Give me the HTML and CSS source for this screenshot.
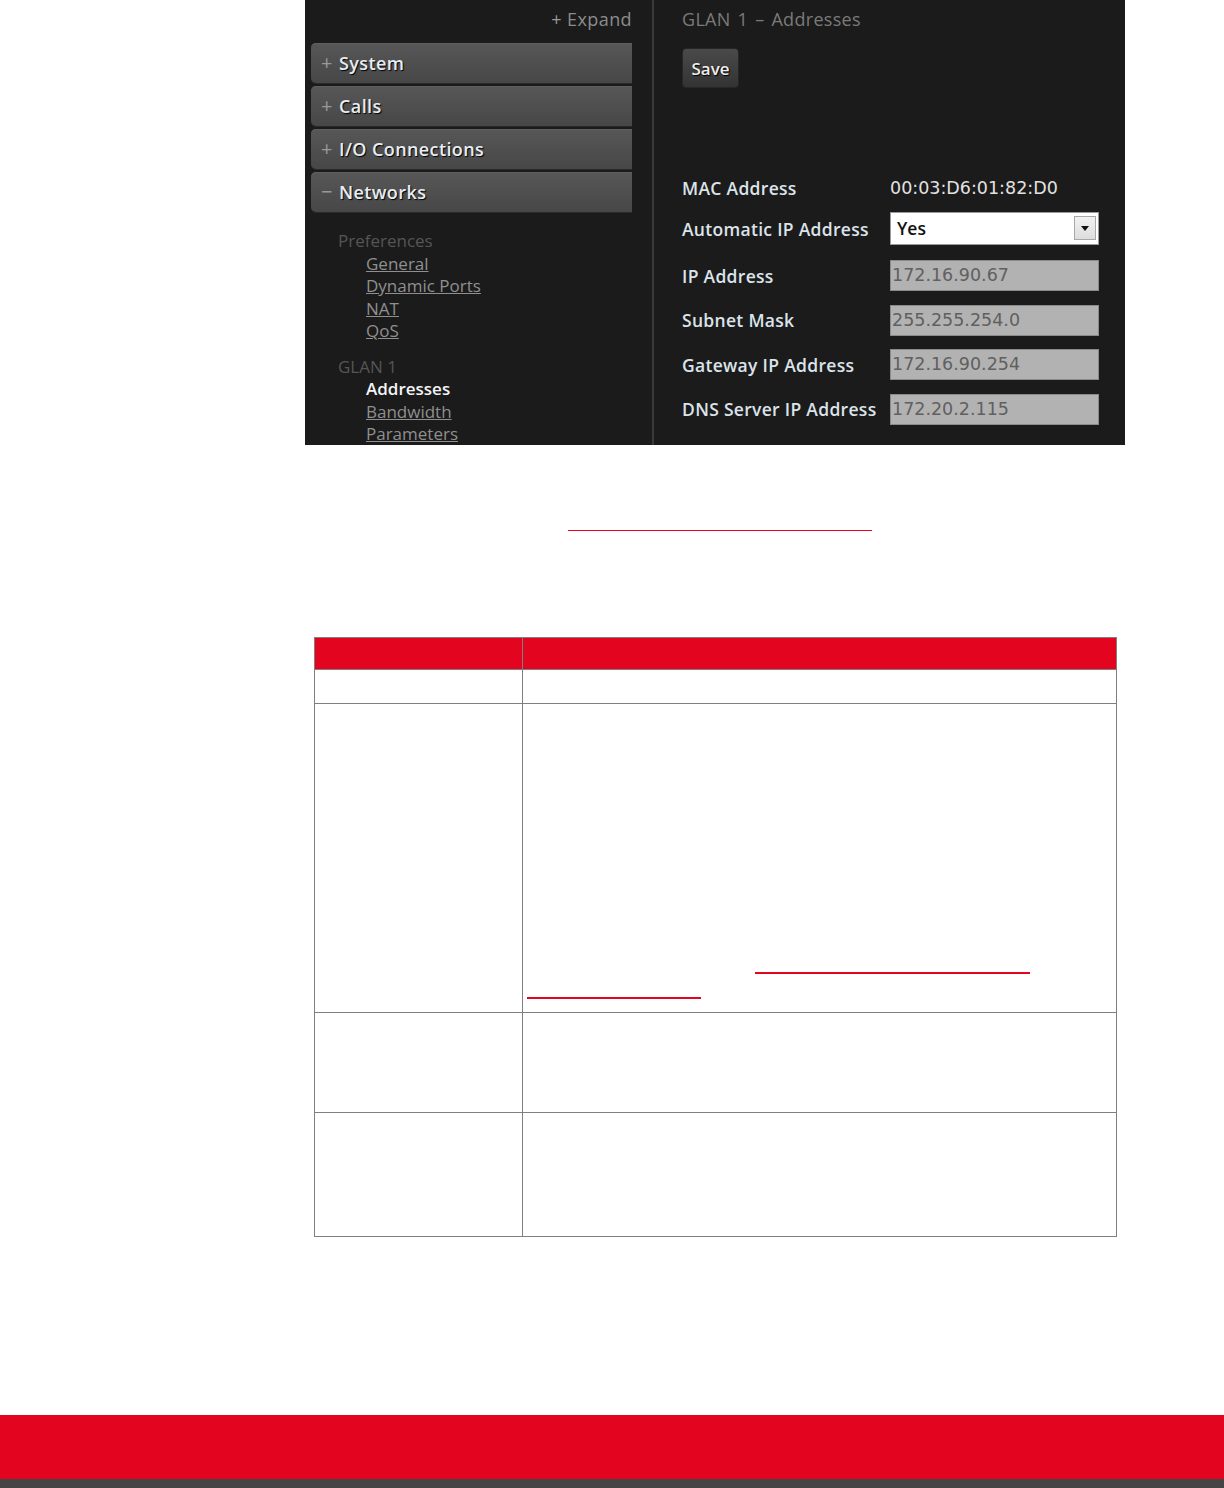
FILE: index.html
```html
<!DOCTYPE html>
<html lang="en">
<head>
	<meta charset="UTF-8">
	<title>GLAN 1 - Addresses</title>
	<link rel="stylesheet" href="styles.css">
</head>
<body>
<div class="content">
	<!-- 界面截图 -->
	<div class="shot">
		<div class="nav">
			<div class="expand"><span class="sign">+</span> Expand</div>
			<ul class="menu">
				<li><span class="sign">+</span>System</li>
				<li><span class="sign">+</span>Calls</li>
				<li><span class="sign">+</span>I/O Connections</li>
				<li><span class="sign">&minus;</span>Networks</li>
			</ul>
			<div class="group">
				<p class="group-name">Preferences</p>
				<a href="#">General</a>
				<a href="#">Dynamic Ports</a>
				<a href="#">NAT</a>
				<a href="#">QoS</a>
			</div>
			<div class="group">
				<p class="group-name">GLAN 1</p>
				<a href="#" class="active">Addresses</a>
				<a href="#">Bandwidth</a>
				<a href="#">Parameters</a>
			</div>
		</div>
		<div class="panel">
			<p class="title">GLAN 1 &ndash; Addresses</p>
			<button class="save">Save</button>
			<div class="form">
				<div class="row mac">
					<span class="label">MAC Address</span>
					<span class="value">00:03:D6:01:82:D0</span>
				</div>
				<div class="row auto">
					<span class="label">Automatic IP Address</span>
					<div class="select">Yes<i class="arrow"></i></div>
				</div>
				<div class="row">
					<span class="label">IP Address</span>
					<div class="input">172.16.90.67</div>
				</div>
				<div class="row">
					<span class="label">Subnet Mask</span>
					<div class="input">255.255.254.0</div>
				</div>
				<div class="row">
					<span class="label">Gateway IP Address</span>
					<div class="input">172.16.90.254</div>
				</div>
				<div class="row">
					<span class="label">DNS Server IP Address</span>
					<div class="input">172.20.2.115</div>
				</div>
			</div>
		</div>
	</div>

	<div class="caption"><a href="#" class="line"></a></div>

	<table class="params">
		<tr class="head"><th class="col1"></th><th></th></tr>
		<tr class="r1"><td></td><td></td></tr>
		<tr class="r2">
			<td></td>
			<td class="bottom">
				<div class="ref"><a href="#" class="line first"></a></div>
				<div class="ref"><a href="#" class="line second"></a></div>
			</td>
		</tr>
		<tr class="r3"><td></td><td></td></tr>
		<tr class="r4"><td></td><td></td></tr>
	</table>
</div>

<div class="footer"></div>
</body>
</html>
```
FILE: styles.css
```css
body {
	margin: 0;
	background: #FFF;
	font-family: "Open Sans", "DejaVu Sans", sans-serif;
}

p {
	margin: 0;
}

.content {
	width: 820px;
	margin-left: 305px;
}

/* 截图区域 */
.shot {
	display: flex;
	height: 445px;
	background: #1B1B1B;
	overflow: hidden;
}

.nav {
	width: 321px;
	padding: 8px 20px 0 6px;
	border-right: 2px solid #3A3A3A;
}

.expand {
	text-align: right;
	color: #8C8C8C;
	font-size: 18px;
	letter-spacing: 0.4px;
	line-height: 22px;
	margin-bottom: 13px;
}

.sign {
	color: #999;
	font-weight: normal;
}

.menu {
	list-style: none;
	margin: 0;
	padding: 0;
}

.menu li {
	height: 40px;
	line-height: 40px;
	margin-bottom: 3px;
	padding-left: 10px;
	background: linear-gradient(#575757, #474747);
	border-radius: 5px 0 0 5px;
	box-shadow: inset 0 1px 0 #5F5F5F, 0 1px 0 #2A2A2A;
	color: #E6EDF4;
	font-size: 18px;
	font-weight: 600;
	letter-spacing: 0.4px;
	text-shadow: 1px 1px 1px #000;
}

.menu li .sign {
	display: inline-block;
	width: 13px;
	margin-right: 5px;
	font-size: 20px;
	text-shadow: none;
}

.group {
	padding-left: 27px;
	margin-top: 18px;
	font-size: 17px;
	line-height: 22.5px;
}

.group + .group {
	margin-top: 13px;
}

.group-name {
	color: #555;
}

.group a {
	display: block;
	margin-left: 28px;
	color: #8F8F8F;
}

.group a.active {
	color: #F2F4F7;
	font-weight: 600;
	text-decoration: none;
}

.panel {
	flex: 1;
	padding: 8px 0 0 28px;
}

.title {
	color: #7A7A7A;
	font-size: 18px;
	letter-spacing: 0.3px;
	word-spacing: 2px;
	line-height: 22px;
}

.save {
	margin-top: 18px;
	width: 57px;
	height: 40px;
	border: 1px solid #262626;
	border-radius: 4px;
	background: linear-gradient(#4A4A4A, #333);
	color: #EEE;
	font-family: inherit;
	font-size: 17px;
	font-weight: 600;
	text-shadow: 1px 1px 1px #000;
	padding: 0;
}

.form {
	margin-top: 84px;
}

.row {
	display: flex;
	align-items: center;
	height: 31px;
	margin-bottom: 13.5px;
	font-size: 17.5px;
}

.row.mac {
	margin-bottom: 9px;
}

.row.auto {
	height: 33px;
	margin-bottom: 15px;
}

.label {
	width: 208px;
	color: #DCE3EA;
	font-weight: 600;
	letter-spacing: 0.3px;
}

.value {
	color: #E2E2E2;
	font-family: "DejaVu Sans", sans-serif;
	font-size: 17.5px;
}

.select {
	position: relative;
	box-sizing: border-box;
	width: 209px;
	height: 33px;
	line-height: 31px;
	padding-left: 6px;
	background: #FFF;
	border: 1px solid #9A9A9A;
	color: #111;
	font-weight: 600;
}

.select .arrow {
	position: absolute;
	right: 2px;
	top: 3px;
	width: 22px;
	height: 24px;
	box-sizing: border-box;
	border: 1px solid #A8A8A8;
	background: linear-gradient(#F2F2F2, #DDD);
}

.select .arrow::after {
	content: "";
	position: absolute;
	left: 6px;
	top: 9px;
	border-left: 4px solid transparent;
	border-right: 4px solid transparent;
	border-top: 5px solid #111;
}

.input {
	box-sizing: border-box;
	width: 209px;
	height: 31px;
	line-height: 29px;
	padding-left: 1px;
	background: #B2B2B2;
	border: 1px solid #8A8A8A;
	color: #606060;
	font-family: "DejaVu Sans", sans-serif;
	font-size: 17.5px;
}

/* 图片说明 */
.caption {
	margin-top: 62px;
	height: 24px;
	padding-left: 263px;
}

.line {
	display: inline-block;
	vertical-align: top;
	height: 23px;
	border-bottom: 1px solid #E30520;
}

.caption .line {
	width: 304px;
}

/* 参数表 */
.params {
	margin: 106px 0 0 9px;
	width: 803px;
	border-collapse: collapse;
}

.params th,
.params td {
	border: 1px solid #7F7F7F;
	padding: 0;
}

.params .col1 {
	width: 207px;
}

.params .head th {
	height: 31px;
	background: #E30520;
}

.params .r1 td {
	height: 33px;
}

.params .r2 td {
	height: 295px;
}

.params .r3 td {
	height: 99px;
}

.params .r4 td {
	height: 123px;
}

.params td.bottom {
	vertical-align: bottom;
	padding: 0 0 13px 4px;
}

.ref {
	height: 25px;
}

.ref .line {
	height: 23px;
	border-bottom-width: 2px;
}

.ref .first {
	margin-left: 228px;
	width: 275px;
}

.ref .second {
	width: 174px;
}

.footer {
	margin-top: 178px;
	height: 64px;
	background: #E30520;
	border-bottom: 9px solid #444;
}
```
